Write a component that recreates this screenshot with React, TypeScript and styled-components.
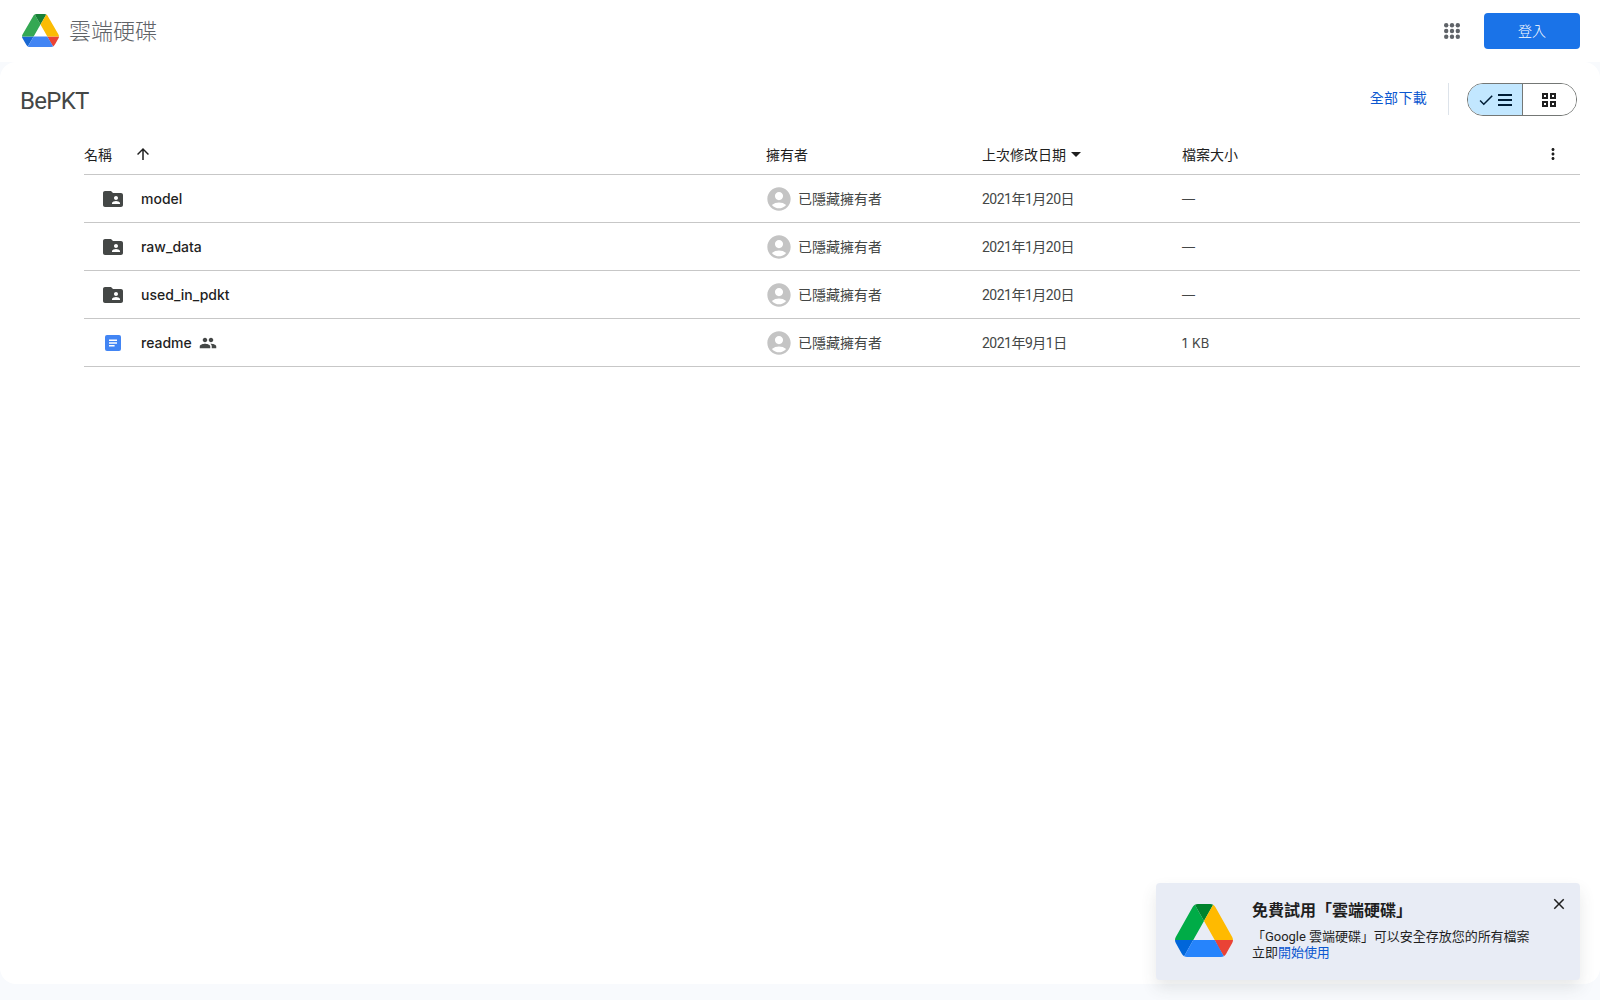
import React from "react";
import styled, { createGlobalStyle } from "styled-components";
import {
  MdAccountCircle,
  MdArrowDropDown,
  MdArrowUpward,
  MdCheck,
  MdClose,
  MdFolderShared,
  MdMoreVert,
  MdPeople,
} from "react-icons/md";

const FONT = `Roboto, "Noto Sans CJK TC", sans-serif`;
const COLUMNS = "682px 216px 200px 1fr 36px";

interface Item {
  name: string;
  kind: "folder" | "doc";
  date: string;
  size: string;
  shared?: boolean;
}

const items: Item[] = [
  { name: "model", kind: "folder", date: "2021年1月20日", size: "—" },
  { name: "raw_data", kind: "folder", date: "2021年1月20日", size: "—" },
  { name: "used_in_pdkt", kind: "folder", date: "2021年1月20日", size: "—" },
  { name: "readme", kind: "doc", date: "2021年9月1日", size: "1 KB", shared: true },
];

const DriveLogo: React.FC<{ width: number; height: number; vivid?: boolean }> = ({ width, height, vivid }) => (
  <svg width={width} height={height} viewBox="0 0 87.3 78" preserveAspectRatio="none">
    <path d="m6.6 66.85 3.85 6.65c.8 1.4 1.95 2.5 3.3 3.3l13.75-23.8h-27.5c0 1.55.4 3.1 1.2 4.5z" fill={vivid ? "#0066da" : "#1967d2"} />
    <path d="m43.65 25-13.75-23.8c-1.35.8-2.5 1.9-3.3 3.3l-25.4 44a9.06 9.06 0 0 0 -1.2 4.5h27.5z" fill={vivid ? "#00ac47" : "#34a853"} />
    <path d="m73.55 76.8c1.35-.8 2.5-1.9 3.3-3.3l1.6-2.75 7.65-13.25c.8-1.4 1.2-2.95 1.2-4.5h-27.502l5.852 11.5z" fill="#ea4335" />
    <path d="m43.65 25 13.75-23.8c-1.35-.8-2.9-1.2-4.5-1.2h-18.5c-1.6 0-3.15.45-4.5 1.2z" fill={vivid ? "#00832d" : "#188038"} />
    <path d="m59.8 53h-32.3l-13.75 23.8c1.35.8 2.9 1.2 4.5 1.2h50.8c1.6 0 3.15-.45 4.5-1.2z" fill={vivid ? "#2684fc" : "#4285f4"} />
    <path d="m73.4 26.5-12.7-22c-.8-1.4-1.95-2.5-3.3-3.3l-13.75 23.8 16.15 28h27.45c0-1.55-.4-3.1-1.2-4.5z" fill={vivid ? "#ffba00" : "#fbbc04"} />
  </svg>
);

const AppsIcon = () => (
  <svg width="16" height="16" viewBox="0 0 16 16" fill="#5f6368">
    {[2.2, 8, 13.8].map((y) =>
      [2.2, 8, 13.8].map((x) => <circle key={`${x}-${y}`} cx={x} cy={y} r="2.2" />)
    )}
  </svg>
);

const DocIcon = () => (
  <svg width="16" height="16" viewBox="0 0 16 16">
    <rect width="16" height="16" rx="2" fill="#4285f4" />
    <path d="M4 4.5h8v1.4H4zM4 7.3h8v1.4H4zM4 10.1h5.6v1.4H4z" fill="#fff" />
  </svg>
);

const ListBars = () => (
  <svg width="14" height="12" viewBox="0 0 14 12" fill="currentColor">
    <path d="M0 0h14v2H0zM0 5h14v2H0zM0 10h14v2H0z" />
  </svg>
);

const GridSquares = () => (
  <svg width="14" height="14" viewBox="0 0 14 14" fill="none" stroke="currentColor" strokeWidth="2">
    <path d="M1 1h4v4H1zM9 1h4v4H9zM1 9h4v4H1zM9 9h4v4H9z" />
  </svg>
);

export default function App() {
  return (
    <>
      <GlobalStyle />
      <Page>
        <TopBar>
          <Brand>
            <DriveLogo width={37} height={33} />
            <BrandName>雲端硬碟</BrandName>
          </Brand>
          <TopActions>
            <AppsIcon />
            <SignIn>登入</SignIn>
          </TopActions>
        </TopBar>
        <Panel>
          <TitleRow>
            <FolderTitle>BePKT</FolderTitle>
            <TitleActions>
              <DownloadLink>全部下載</DownloadLink>
              <Divider />
              <Toggle>
                <ToggleSide $active>
                  <MdCheck size={18} />
                  <ListBars />
                </ToggleSide>
                <ToggleSide>
                  <GridSquares />
                </ToggleSide>
              </Toggle>
            </TitleActions>
          </TitleRow>
          <Table>
            <HeadRow>
              <HeadCell>
                名稱
                <SortArrow>
                  <MdArrowUpward size={18} />
                </SortArrow>
              </HeadCell>
              <HeadCell>擁有者</HeadCell>
              <HeadCell>
                上次修改日期
                <DropArrow>
                  <MdArrowDropDown size={24} />
                </DropArrow>
              </HeadCell>
              <HeadCell>檔案大小</HeadCell>
              <MoreCell>
                <MdMoreVert size={18} />
              </MoreCell>
            </HeadRow>
            {items.map((item) => (
              <Row key={item.name}>
                <NameCell>
                  <FileIcon>
                    {item.kind === "folder" ? <MdFolderShared size={24} /> : <DocIcon />}
                  </FileIcon>
                  {item.name}
                  {item.shared && (
                    <SharedIcon>
                      <MdPeople size={18} />
                    </SharedIcon>
                  )}
                </NameCell>
                <OwnerCell>
                  <MdAccountCircle size={28} color="#c4c4c4" />
                  已隱藏擁有者
                </OwnerCell>
                <DateCell>{item.date}</DateCell>
                <SizeCell>{item.size}</SizeCell>
                <span />
              </Row>
            ))}
          </Table>
        </Panel>
        <Toast>
          <DriveLogo width={58} height={53} vivid />
          <ToastBody>
            <ToastTitle>免費試用「雲端硬碟」</ToastTitle>
            <ToastText>
              「Google 雲端硬碟」可以安全存放您的所有檔案
              <br />
              立即<ToastLink>開始使用</ToastLink>
            </ToastText>
          </ToastBody>
          <ToastClose>
            <MdClose size={18} />
          </ToastClose>
        </Toast>
      </Page>
    </>
  );
}

const GlobalStyle = createGlobalStyle`
  html, body {
    margin: 0;
    padding: 0;
    background: #f8fafd;
    font-family: ${FONT};
  }
`;

const Page = styled.div`
  position: relative;
  width: 1600px;
  height: 1000px;
  overflow: hidden;
  display: flex;
  flex-direction: column;
`;

const TopBar = styled.header`
  height: 62px;
  flex: none;
  box-sizing: border-box;
  padding: 0 20px 0 22px;
  background: #fff;
  display: flex;
  align-items: center;
  justify-content: space-between;
`;

const Brand = styled.div`
  display: flex;
  align-items: center;
  gap: 10px;
  margin-bottom: 1px;
`;

const BrandName = styled.div`
  font-size: 22px;
  font-weight: 300;
  color: #5f6368;
  margin-bottom: 3px;
`;

const TopActions = styled.div`
  display: flex;
  align-items: center;
  gap: 24px;
`;

const SignIn = styled.button`
  width: 96px;
  height: 36px;
  padding: 0 0 2px;
  border: 0;
  border-radius: 4px;
  background: #1a73e8;
  color: #fff;
  font-family: ${FONT};
  font-size: 14px;
  font-weight: 300;
`;

const Panel = styled.main`
  height: 922px;
  flex: none;
  background: #fff;
  border-radius: 16px;
  box-sizing: border-box;
  padding: 19px 20px 0 84px;
`;

const TitleRow = styled.div`
  height: 38px;
  margin-left: -64px;
  display: flex;
  align-items: center;
  justify-content: space-between;
`;

const FolderTitle = styled.h1`
  margin: 2px 0 0;
  font-size: 24px;
  font-weight: 400;
  letter-spacing: -0.7px;
  color: #444746;
`;

const TitleActions = styled.div`
  display: flex;
  align-items: center;
`;

const DownloadLink = styled.a`
  margin-bottom: 6px;
  font-size: 14px;
  letter-spacing: 0.3px;
  color: #0b57d0;
`;

const Divider = styled.div`
  width: 1px;
  height: 32px;
  margin: 0 18px 2px 21px;
  background: #dde3ea;
`;

const Toggle = styled.div`
  width: 108px;
  height: 31px;
  margin-right: 3px;
  margin-bottom: 1px;
  border: 1px solid #747775;
  border-radius: 16px;
  overflow: hidden;
  display: flex;
`;

const ToggleSide = styled.div<{ $active?: boolean }>`
  flex: 1;
  display: flex;
  align-items: center;
  justify-content: center;
  gap: 3px;
  color: ${(p) => (p.$active ? "#001d35" : "#1f1f1f")};
  background: ${(p) => (p.$active ? "#c2e7ff" : "#fff")};
  border-left: ${(p) => (p.$active ? "0" : "1px solid #747775")};
`;

const Table = styled.div`
  display: flex;
  flex-direction: column;
`;

const HeadRow = styled.div`
  display: grid;
  grid-template-columns: ${COLUMNS};
  height: 56px;
  padding-top: 14px;
  box-sizing: border-box;
  align-items: center;
  border-bottom: 1px solid #c7c7c7;
`;

const HeadCell = styled.div`
  display: flex;
  align-items: center;
  font-size: 14px;
  color: #1f1f1f;
`;

const SortArrow = styled.span`
  display: flex;
  margin-left: 22px;
`;

const DropArrow = styled.span`
  display: flex;
  margin-left: -2px;
`;

const MoreCell = styled.div`
  display: flex;
  color: #1f1f1f;
`;

const Row = styled.div`
  display: grid;
  grid-template-columns: ${COLUMNS};
  height: 48px;
  box-sizing: border-box;
  align-items: center;
  border-bottom: 1px solid #c7c7c7;
`;

const Cell = styled.div`
  font-size: 14px;
  color: #444746;
`;

const NameCell = styled.div`
  display: flex;
  align-items: center;
  font-family: Inter, ${FONT};
  font-size: 14px;
  font-weight: 500;
  color: #1f1f1f;
  padding-left: 17px;
`;

const FileIcon = styled.span`
  width: 24px;
  height: 24px;
  margin-right: 16px;
  display: flex;
  align-items: center;
  justify-content: center;
  color: #444746;
`;

const SharedIcon = styled.span`
  display: flex;
  margin-left: 7px;
  color: #444746;
`;

const OwnerCell = styled(Cell)`
  display: flex;
  align-items: center;
  gap: 5px;
  margin-left: -1px;
  padding-bottom: 2px;
  svg {
    margin-top: 2px;
  }
`;

const DateCell = styled(Cell)`
  padding-bottom: 2px;
  letter-spacing: -0.5px;
`;

const SizeCell = styled(Cell)`
  font-family: Inter, ${FONT};
  font-size: 13px;
  word-spacing: 1px;
`;

const Toast = styled.aside`
  position: absolute;
  left: 1156px;
  top: 883px;
  width: 424px;
  height: 97px;
  box-sizing: border-box;
  padding: 21px 0 0 19px;
  background: #e8ecf5;
  border-radius: 4px;
  box-shadow: 0 8px 16px rgba(60, 64, 67, 0.12);
  display: flex;
  align-items: flex-start;
  gap: 19px;
`;

const ToastBody = styled.div`
  margin-top: -5px;
`;

const ToastTitle = styled.div`
  font-size: 16px;
  font-weight: 700;
  line-height: 24px;
  color: #1f1f1f;
`;

const ToastText = styled.div`
  margin-top: 6px;
  font-size: 13px;
  line-height: 16px;
  letter-spacing: -0.03px;
  color: #1f1f1f;
`;

const ToastLink = styled.a`
  color: #0b57d0;
`;

const ToastClose = styled.span`
  position: absolute;
  top: 12px;
  right: 12px;
  display: flex;
  color: #1f1f1f;
`;
